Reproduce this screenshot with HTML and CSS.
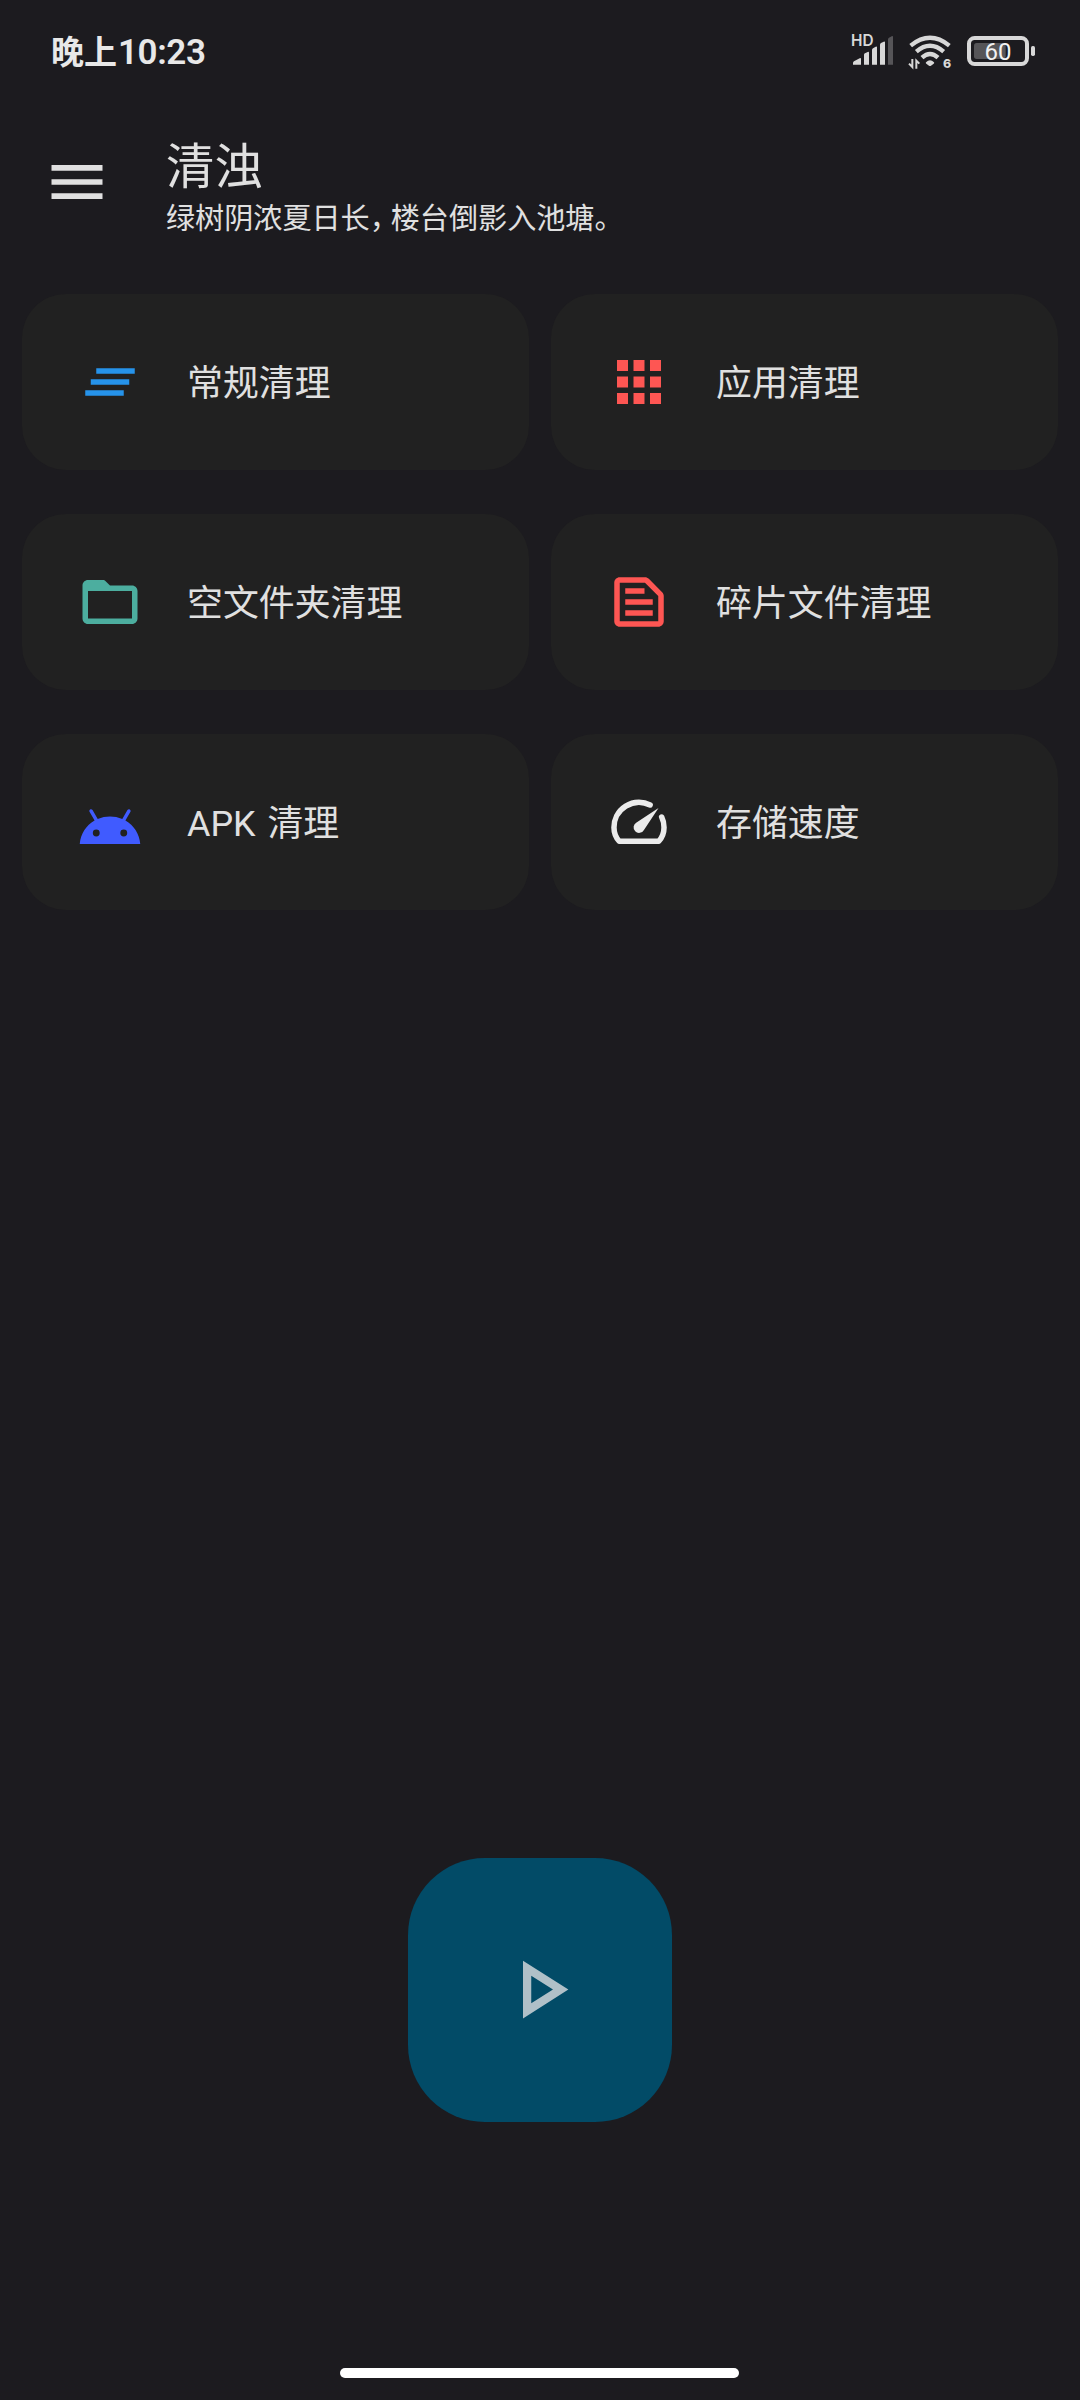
FILE: index.html
```html
<!DOCTYPE html>
<html lang="zh-CN">
<head>
<meta charset="utf-8">
<title>清浊</title>
<link rel="stylesheet" href="styles.css">
</head>
<body>
<div class="screen">
  <div class="status-bar">
    <div class="clock"><span class="clock-period">晚上</span><span class="clock-time">10:23</span></div>
    <div class="status-icons">
      <svg class="status-icon" width="45" height="40" viewBox="90 60 135 120">
        <text class="hd" x="93" y="108">HD</text>
        <path d="M99 164v-5q0-3 3-5l17-9q4-2 4 2v17zM132 164v-30q0-3 3-4l8-4q4-2 4 2v36zM156 164v-44q0-3 3-5l8-5q4-2 4 2v52zM180 164v-60q0-3 3-5l8-4q4-2 4 2v67z"/>
        <path class="dim" d="M204 164v-76q0-3 3-5l8-4q4-2 4 2v83z"/>
      </svg>
      <svg class="status-icon" width="45" height="40" viewBox="264 60 135 120">
        <g class="wifi-arcs">
          <path d="M272 107Q330 60 388 107"/>
          <path d="M289 125Q330 90 371 125"/>
          <path d="M306 143Q330 121 354 143"/>
        </g>
        <path d="M318 157q12-12 24 0q2 2-1 4l-8 6q-3 2-6 0l-8-6q-3-2-1-4z"/>
        <path class="traffic" d="M277 147v24l-10-10M289 176v-24l9 9"/>
        <text class="wifi-gen" x="369" y="174">6</text>
      </svg>
      <svg class="status-icon" width="70" height="40" viewBox="438 60 210 120">
        <rect class="dim" x="462" y="99" width="95" height="48" rx="8"/>
        <rect class="battery-shell" x="447" y="84" width="174" height="78" rx="17"/>
        <rect x="633" y="108" width="12" height="30" rx="5"/>
        <text class="battery-level" x="534" y="150">60</text>
      </svg>
    </div>
  </div>

  <header class="app-bar">
    <svg class="menu" viewBox="0 0 24 24"><path d="M3 18h18v-2H3v2zm0-5h18v-2H3v2zm0-7v2h18V6H3z"/></svg>
    <div class="titles">
      <h1 class="title">清浊</h1>
      <p class="subtitle">绿树阴浓夏日长<span class="comma">，</span>楼台倒影入池塘。</p>
    </div>
  </header>

  <main class="grid">
    <div class="card">
      <svg class="icon blue" viewBox="0 0 24 24"><path d="M5 13h14v-2H5v2zm-2 4h14v-2H3v2zM7 7v2h14V7H7z"/></svg>
      <span class="label">常规清理</span>
    </div>
    <div class="card">
      <svg class="icon red" viewBox="0 0 24 24"><path d="M4 8h4V4H4v4zm6 12h4v-4h-4v4zm-6 0h4v-4H4v4zm0-6h4v-4H4v4zm6 0h4v-4h-4v4zm6-10v4h4V4h-4zm-6 4h4V4h-4v4zm6 6h4v-4h-4v4zm0 6h4v-4h-4v4z"/></svg>
      <span class="label">应用清理</span>
    </div>
    <div class="card">
      <svg class="icon teal" viewBox="0 0 24 24"><path d="M20 6h-8l-1.400-1.400C10.200 4.200 10 4 9.500 4H4c-1.100 0-2 .9-2 2v12c0 1.100.9 2 2 2h16c1.100 0 2-.9 2-2V8c0-1.100-.9-2-2-2zm0 12H4V8h16v10z"/></svg>
      <span class="label">空文件夹清理</span>
    </div>
    <div class="card">
      <svg class="icon red" viewBox="0 0 24 24"><path d="M14.170 5L19 9.830V19H5V5h9.170m0-2H5c-1.100 0-2 .9-2 2v14c0 1.100.9 2 2 2h14c1.100 0 2-.9 2-2V9.830c0-.53-.21-1.040-.59-1.410l-4.830-4.830c-.37-.38-.88-.59-1.410-.59zM7 15h10v2H7v-2zm0-4h10v2H7v-2zm0-4h7v2H7V7z"/></svg>
      <span class="label">碎片文件清理</span>
    </div>
    <div class="card">
      <svg class="icon indigo" viewBox="0 -2 24 24"><path d="M17.600 9.480l1.840-3.180c.16-.31.04-.69-.26-.85-.29-.15-.65-.06-.83.22l-1.880 3.240c-2.860-1.210-6.080-1.210-8.940 0L5.650 5.670c-.19-.29-.58-.38-.87-.2-.28.18-.37.54-.22.83L6.400 9.480C3.300 11.250 1.280 14.440 1 18h22c-.28-3.560-2.300-6.750-5.400-8.520zM7 15.250a1.250 1.250 0 1 1 0-2.500 1.250 1.250 0 0 1 0 2.500zm10 0a1.250 1.250 0 1 1 0-2.500 1.250 1.250 0 0 1 0 2.500z"/></svg>
      <span class="label">APK <span class="after-latin">清理</span></span>
    </div>
    <div class="card">
      <svg class="icon white" viewBox="0 0 24 24">
        <path class="dial" d="M16.050 5.800A9.100 9.100 0 0 0 2.900 14Q2.900 16.900 4.800 19H19.200Q21.100 16.900 21.100 14Q21.100 11.900 20.250 10.200"/>
        <path d="M19.100 6.900L13.800 14.900A2 2 0 1 1 11.100 12.200z"/>
      </svg>
      <span class="label">存储速度</span>
    </div>
  </main>

  <div class="start">
    <svg class="play" viewBox="0 0 24 24"><path d="M10 8.640L15.270 12 10 15.360V8.640M8 5v14l11-7L8 5z"/></svg>
  </div>

  <div class="home-indicator"></div>
</div>
</body>
</html>
```
FILE: styles.css
```css
* {
  box-sizing: border-box;
  margin: 0;
  padding: 0;
}

body {
  background: #1c1b1f;
  color: #e0e0e0;
  font-family: Roboto, "Noto Sans CJK SC", sans-serif;
}

svg {
  display: block;
  flex: none;
  fill: currentColor;
}

.screen {
  width: 1080px;
  height: 2400px;
  display: flex;
  flex-direction: column;
  align-items: center;
}

.status-bar {
  width: 100%;
  height: 100px;
  padding: 0 44px 0 51px;
  display: flex;
  align-items: center;
  justify-content: space-between;
  color: #e8e8e8;
}

.clock {
  display: flex;
  align-items: center;
  font-size: 35px;
  line-height: 50px;
  padding-top: 5px;
}

.clock-period {
  font-size: 33px;
  font-weight: 700;
}

.clock-time {
  font-weight: 600;
  letter-spacing: -0.4px;
  margin-left: 1px;
}

.status-icons {
  display: flex;
  gap: 13px;
  color: #d8d8d8;
}

.hd {
  font-family: Inter, sans-serif;
  font-size: 46px;
  font-weight: 600;
}

.dim {
  fill: #565558;
}

.wifi-arcs path,
.traffic,
.battery-shell {
  fill: none;
  stroke: currentColor;
}

.wifi-arcs path {
  stroke-width: 13;
}

.traffic {
  stroke-width: 6;
}

.wifi-gen {
  font-family: Inter, sans-serif;
  font-size: 37px;
  font-weight: 800;
}

.battery-shell {
  stroke-width: 12;
}

.battery-level {
  font-family: Roboto, sans-serif;
  font-size: 72px;
  font-weight: 400;
  text-anchor: middle;
  fill: #f2f2f2;
}

.app-bar {
  width: 100%;
  height: 194px;
  padding: 38px 43px 0;
  display: flex;
  gap: 55px;
}

.menu {
  width: 68px;
  height: 68px;
  margin-top: 10px;
}

.title {
  font-size: 48.500px;
  line-height: 60px;
  font-weight: 400;
}

.subtitle {
  font-size: 29.100px;
  line-height: 40px;
  margin-top: 1px;
}

.comma {
  letter-spacing: -8px;
}

.grid {
  width: 1036px;
  display: grid;
  grid-template-columns: 1fr 1fr;
  grid-auto-rows: 176px;
  gap: 44px 22px;
}

.card {
  display: flex;
  align-items: center;
  gap: 44px;
  padding: 0 55px;
  border-radius: 44px;
  background: #212121;
}

.icon {
  width: 66px;
  height: 66px;
}

.blue { color: #2693ea; }
.red { color: #fe5653; }
.teal { color: #4cae9f; }
.indigo { color: #405bff; }
.white { color: #ebebeb; }

.dial {
  fill: none;
  stroke: currentColor;
  stroke-width: 2;
  stroke-linecap: round;
  stroke-linejoin: round;
}

.label {
  font-size: 35.900px;
  line-height: 52px;
  padding-top: 4px;
  white-space: nowrap;
}

.after-latin {
  margin-left: 3px;
}

.start {
  width: 264px;
  height: 264px;
  margin-top: 948px;
  padding: 0 1px 1px 0;
  border-radius: 77px;
  display: flex;
  align-items: center;
  justify-content: center;
  background: #024b67;
  color: #b0c0c8;
}

.play {
  width: 99px;
  height: 99px;
}

.home-indicator {
  width: 399px;
  height: 10px;
  margin: auto 1px 22px 0;
  border-radius: 5px;
  background: #fff;
}
```
